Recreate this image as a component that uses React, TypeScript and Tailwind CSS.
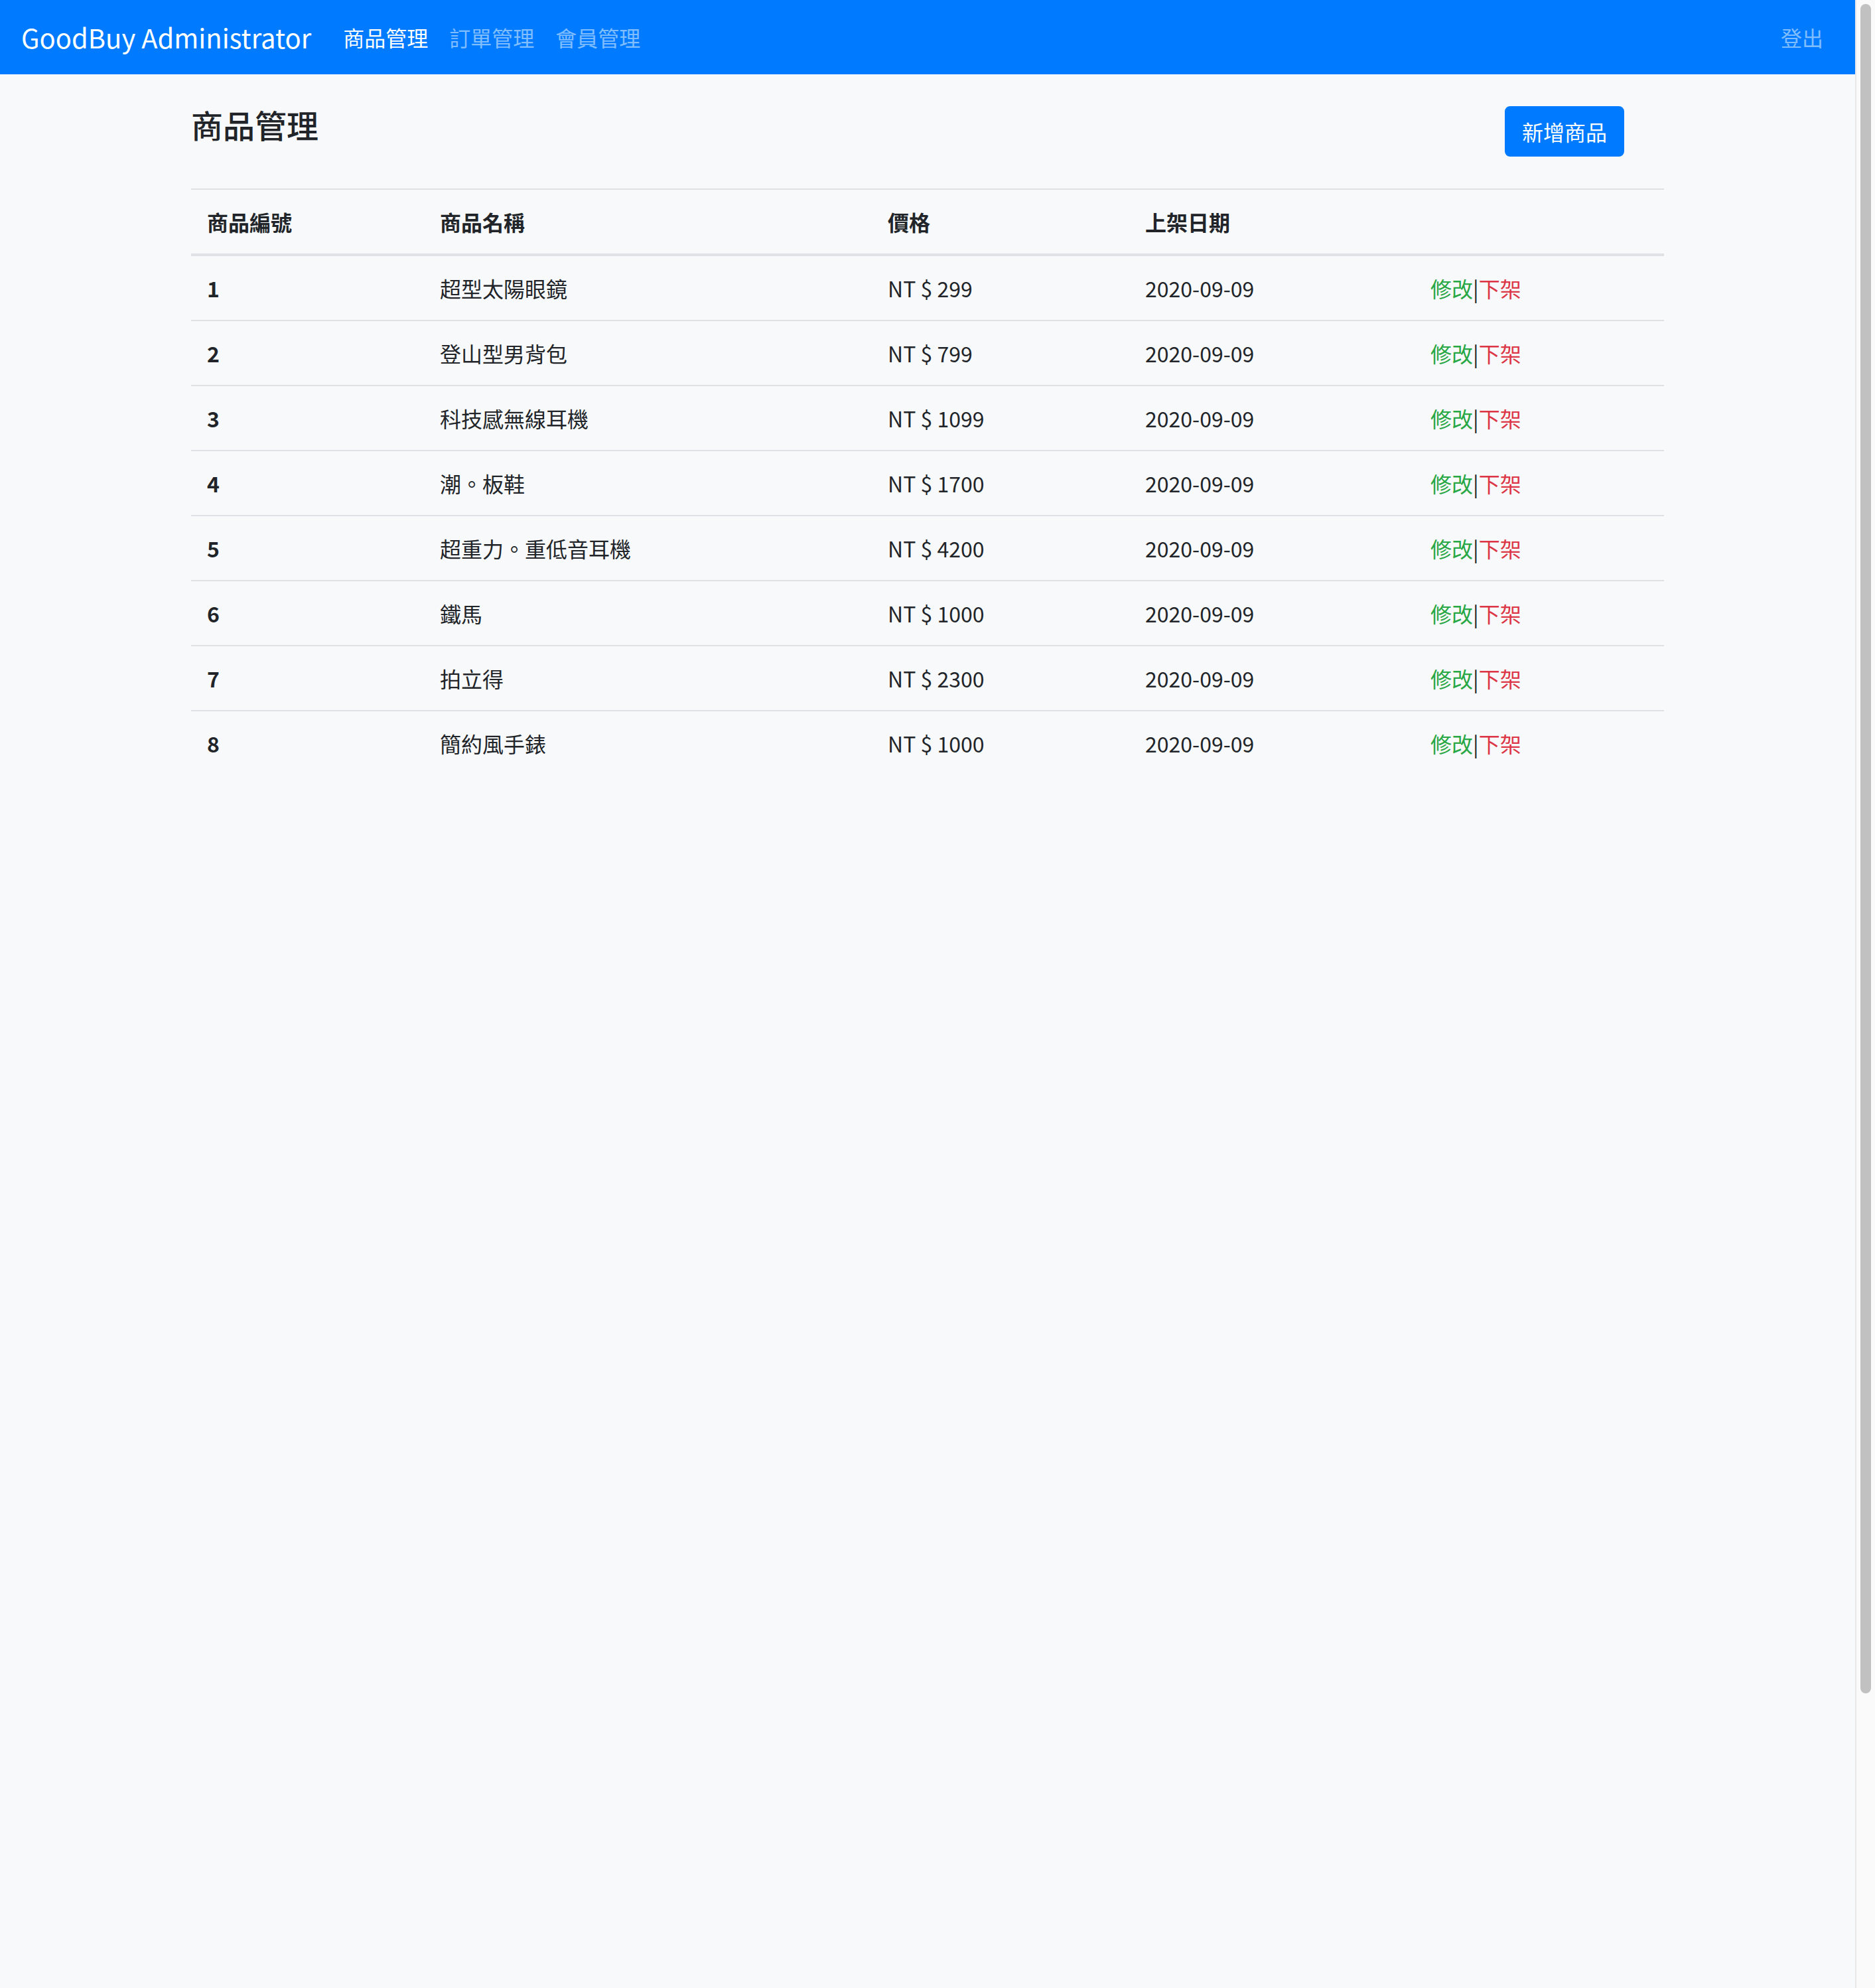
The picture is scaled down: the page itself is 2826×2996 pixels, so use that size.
import React from "react";

const products = [
  { id: 1, name: "超型太陽眼鏡", price: 299 },
  { id: 2, name: "登山型男背包", price: 799 },
  { id: 3, name: "科技感無線耳機", price: 1099 },
  { id: 4, name: "潮。板鞋", price: 1700 },
  { id: 5, name: "超重力。重低音耳機", price: 4200 },
  { id: 6, name: "鐵馬", price: 1000 },
  { id: 7, name: "拍立得", price: 2300 },
  { id: 8, name: "簡約風手錶", price: 1000 },
];

const font = "font-['Noto_Sans_CJK_TC','Noto_Sans_CJK_SC',sans-serif]";

function Navbar() {
  return (
    <nav className="flex h-[112px] items-center bg-[#007bff] px-8">
      <a className="mr-8 text-[40px] leading-[60px] text-white">GoodBuy Administrator</a>
      <ul className="flex text-[32px] leading-[48px]">
        <li className="px-4 text-white">商品管理</li>
        <li className="px-4 text-white/50">訂單管理</li>
        <li className="px-4 text-white/50">會員管理</li>
      </ul>
      <div className="ml-auto px-4 text-[32px] leading-[48px] text-white/50">登出</div>
    </nav>
  );
}

function ProductTable() {
  return (
    <table className="w-full table-fixed border-collapse text-[32px] leading-[48px] text-[#212529]">
      <colgroup>
        <col className="w-[351px]" />
        <col className="w-[675px]" />
        <col className="w-[388px]" />
        <col className="w-[430px]" />
        <col />
      </colgroup>
      <thead>
        <tr>
          <th className="border-t-2 border-b-4 border-[#dee2e6] p-6 text-left font-bold">商品編號</th>
          <th className="border-t-2 border-b-4 border-[#dee2e6] p-6 text-left font-bold">商品名稱</th>
          <th className="border-t-2 border-b-4 border-[#dee2e6] p-6 text-left font-bold">價格</th>
          <th className="border-t-2 border-b-4 border-[#dee2e6] p-6 text-left font-bold">上架日期</th>
          <th className="border-t-2 border-b-4 border-[#dee2e6] p-6 text-left font-bold"></th>
        </tr>
      </thead>
      <tbody>
        {products.map((p) => (
          <tr key={p.id}>
            <th className="border-t-2 border-[#dee2e6] p-6 text-left font-bold">{p.id}</th>
            <td className="border-t-2 border-[#dee2e6] p-6">{p.name}</td>
            <td className="border-t-2 border-[#dee2e6] p-6">NT $ {p.price}</td>
            <td className="border-t-2 border-[#dee2e6] p-6">2020-09-09</td>
            <td className="border-t-2 border-[#dee2e6] p-6">
              <a className="text-[#28a745]">修改</a>|<a className="text-[#dc3545]">下架</a>
            </td>
          </tr>
        ))}
      </tbody>
    </table>
  );
}

export default function App() {
  return (
    <div className={`flex min-h-[2996px] bg-[#f8f9fa] ${font}`}>
      <div className="flex-1">
        <Navbar />
        <main className="mx-auto max-w-[2280px] px-[30px]">
          <div className="mt-12 mb-12 flex items-start justify-between">
            <h4 className="text-[48px] leading-[54px] font-medium text-[#212529]">商品管理</h4>
            <button className="mr-[60px] h-[76px] rounded-lg border-2 border-[#007bff] bg-[#007bff] px-6 text-[32px] leading-[48px] text-white">
              新增商品
            </button>
          </div>
          <ProductTable />
        </main>
      </div>
      {/* fake browser scrollbar */}
      <div className="w-[30px] shrink-0 border-l-2 border-[#e8e8e8] bg-[#fafafa] pt-[6px] pl-[6px]">
        <div className="h-[2546px] w-[16px] rounded-full bg-[#c1c1c1]" />
      </div>
    </div>
  );
}
